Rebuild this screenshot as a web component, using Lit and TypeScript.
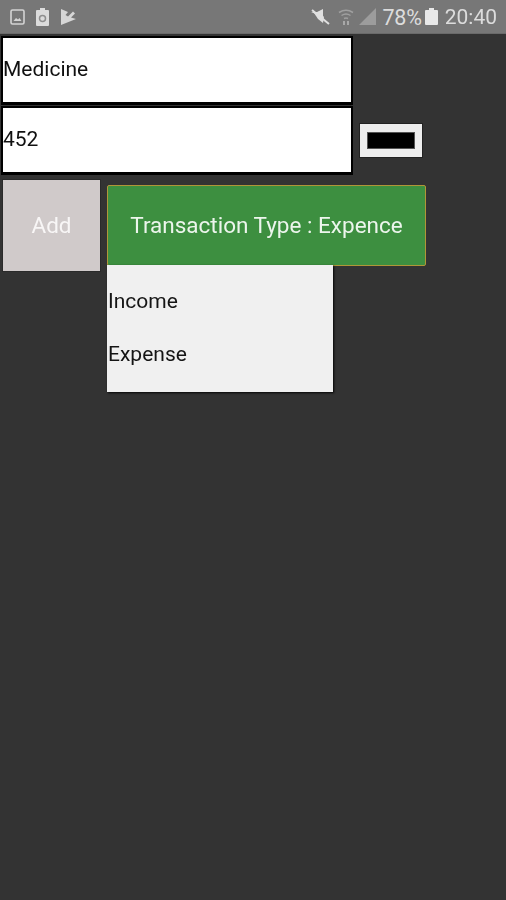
import { LitElement, html, css } from "lit";
import { customElement } from "lit/decorators.js";

@customElement("app-root")
export class AppRoot extends LitElement {
  static styles = css`
    :host {
      display: block;
      width: 506px;
      height: 900px;
      background: #333333;
      font-family: Roboto, "Liberation Sans", sans-serif;
      overflow: hidden;
    }
    .page { filter: blur(0.35px); }
    .status {
      height: 33px;
      background: #777777;
      border-bottom: 1px solid #6a6a6a;
      display: flex;
      align-items: center;
      color: #dcdcdc;
      padding: 0 9px 0 10px;
    }
    .left { display: flex; align-items: center; }
    .clip { margin-left: 11px; }
    .flag { margin-left: 12px; }
    .right { margin-left: auto; display: flex; align-items: center; }
    .status svg { display: block; }
    .wifi { margin-left: 7px; }
    .signal { margin-left: 4px; }
    .pct { font-size: 21.5px; margin-left: 6px; letter-spacing: -0.2px; padding-top: 1px; }
    .battery { margin-left: 3px; }
    .time { font-size: 21px; margin-left: 7px; padding-top: 1px; }
    .content {
      padding: 2px 0 0 1px;
      display: flex;
      flex-direction: column;
    }
    .row { display: flex; align-items: center; }
    .field {
      box-sizing: border-box;
      width: 352px;
      height: 69px;
      background: #ffffff;
      border: 2px solid #000000;
      border-bottom-width: 3px;
      font-size: 21px;
      color: #111111;
      display: flex;
      align-items: center;
      padding-bottom: 2px;
    }
    .second { margin-top: 1px; }
    .swatch {
      box-sizing: border-box;
      width: 64px;
      height: 35px;
      margin-left: 6px;
      background: #eeeeee;
      border: 1px solid #222222;
      display: flex;
      align-items: center;
      justify-content: center;
    }
    .swatch i {
      display: block;
      width: 48px;
      height: 17px;
      background: #000000;
      border: 1px solid #555555;
      box-sizing: border-box;
    }
    .actions {
      display: flex;
      align-items: flex-start;
      margin-top: 4px;
      padding-left: 1px;
    }
    .add {
      box-sizing: border-box;
      width: 99px;
      height: 93px;
      background: #d0caca;
      border: 1px solid #2a2a2a;
      color: #f8f6f6;
      font-size: 22.5px;
      display: flex;
      align-items: center;
      justify-content: center;
      padding-bottom: 2px;
    }
    .dropdown {
      position: relative;
      margin: 6px 0 0 6px;
    }
    .type {
      box-sizing: border-box;
      width: 319px;
      height: 81px;
      background: #3d8f40;
      border: 1px solid #b09638;
      border-radius: 2px;
      color: #ecf5ec;
      font-size: 22.5px;
      display: flex;
      align-items: center;
      justify-content: center;
      padding-bottom: 2px;
    }
    .menu {
      position: absolute;
      left: 0;
      top: 80px;
      box-sizing: border-box;
      width: 226px;
      height: 127px;
      background: #f0f0f0;
      box-shadow: 1px 1px 2px rgba(0, 0, 0, 0.9);
      padding-top: 9px;
      font-size: 21px;
      color: #151515;
    }
    .item {
      height: 53px;
      display: flex;
      align-items: center;
      padding-left: 1px;
    }
  `;

  render() {
    return html`
      <div class="page">
        <div class="status">
          <div class="left">
            <svg width="15" height="16" viewBox="0 0 15 16" fill="none">
              <rect x="1" y="1" width="13" height="14" rx="1.5" stroke="#d4d4d4" stroke-width="1.6" />
              <path d="M3.5 12 L6 9 L8 10.5 L9.5 9 L11.5 12 Z" fill="#d4d4d4" />
            </svg>
            <svg class="clip" width="13" height="18" viewBox="0 0 13 18">
              <path fill="#dcdcdc" d="M4 0h5v2h3a1 1 0 0 1 1 1V17a1 1 0 0 1-1 1H1a1 1 0 0 1-1-1V3a1 1 0 0 1 1-1h3z" />
              <circle cx="6.5" cy="10.5" r="3" fill="none" stroke="#8f8f8f" stroke-width="1.5" />
            </svg>
            <svg class="flag" width="15" height="16" viewBox="0 0 15 16">
              <path fill="#d6d6d6" d="M0 0 L7 3 L4.5 6 L7 7.5 L12 2.5 L14 4.5 L10 8.5 L15 10 L0 16 Z" />
            </svg>
          </div>
          <div class="right">
            <svg width="19" height="18" viewBox="0 0 19 18">
              <path fill="#e0e0e0" d="M0 4h6l6-3v8z" />
              <path fill="#e0e0e0" d="M3 5 L7 11 L12 15 L13 9 L9 4z" />
              <path d="M1 2 L18 16" stroke="#e0e0e0" stroke-width="2" />
            </svg>
            <svg class="wifi" width="18" height="18" viewBox="0 0 18 18" fill="none">
              <path d="M2 4.5 Q9 0 16 4.5 M4.5 7.5 Q9 4.5 13.5 7.5 M7 10.5 Q9 9.5 11 10.5" stroke="#a0a0a0" stroke-width="1.5" />
              <path d="M6 13h2v4H6zM10 13h2v4h-2z" fill="#a8a8a8" />
            </svg>
            <svg class="signal" width="17" height="17" viewBox="0 0 17 17">
              <path d="M0 17 L17 0 V17 Z" fill="#9c9c9c" />
            </svg>
            <span class="pct">78%</span>
            <svg class="battery" width="13" height="17" viewBox="0 0 13 17">
              <path fill="#e8e8e8" d="M4 0h5v2h3a1 1 0 0 1 1 1v13a1 1 0 0 1-1 1H1a1 1 0 0 1-1-1V3a1 1 0 0 1 1-1h3z" />
            </svg>
            <span class="time">20:40</span>
          </div>
        </div>
        <div class="content">
          <div class="field">Medicine</div>
          <div class="row second">
            <div class="field">452</div>
            <div class="swatch"><i></i></div>
          </div>
          <div class="actions">
            <div class="add">Add</div>
            <div class="dropdown">
              <div class="type">Transaction Type : Expence</div>
              <div class="menu">
                <div class="item">Income</div>
                <div class="item">Expense</div>
              </div>
            </div>
          </div>
        </div>
      </div>
    `;
  }
}
